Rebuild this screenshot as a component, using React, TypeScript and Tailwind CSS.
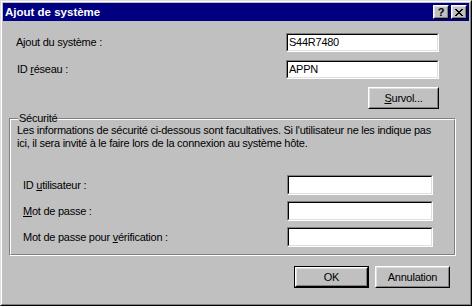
import React from "react";

function CloseGlyph() {
  // 8x7 pixel X
  const rows = [
    [0, 1, 6, 7],
    [1, 2, 5, 6],
    [2, 3, 4, 5],
    [3, 4],
    [2, 3, 4, 5],
    [1, 2, 5, 6],
    [0, 1, 6, 7],
  ];
  return (
    <svg width="8" height="7" viewBox="0 0 8 7" shapeRendering="crispEdges">
      {rows.map((r, y) =>
        r.map((x) => <rect key={`${x}-${y}`} x={x} y={y} width="1" height="1" fill="#000" />)
      )}
    </svg>
  );
}

function CaptionButton({ children }: { children: React.ReactNode }) {
  return (
    <div className="w-[16px] h-[14px] border border-t-white border-l-white border-r-black border-b-black">
      <div className="w-full h-full bg-[#c0c0c0] border border-t-[#dfdfdf] border-l-[#dfdfdf] border-r-[#808080] border-b-[#808080] flex items-center justify-center">
        {children}
      </div>
    </div>
  );
}

function Field({ value, size }: { value?: string; size: string }) {
  return (
    <div className={`${size} border border-t-[#808080] border-l-[#808080] border-r-white border-b-white`}>
      <div className="w-full h-full bg-white border border-t-black border-l-black border-r-[#dfdfdf] border-b-[#dfdfdf] flex items-center pl-[1px] text-[11px] leading-[13px] tracking-[-0.25px] text-black">
        {value}
      </div>
    </div>
  );
}

function PushButton({ children, size }: { children: React.ReactNode; size: string }) {
  return (
    <div className={`${size} border border-t-white border-l-white border-r-black border-b-black`}>
      <div className="w-full h-full bg-[#c0c0c0] border border-t-[#dfdfdf] border-l-[#dfdfdf] border-r-[#808080] border-b-[#808080] flex items-center justify-center text-[11px] leading-[13px] tracking-[-0.25px] text-black">
        {children}
      </div>
    </div>
  );
}

export default function App() {
  return (
    <div className="w-[472px] h-[306px] bg-[#c0c0c0] font-['Liberation_Sans',Arial,sans-serif] text-black text-[11px] leading-[13px] tracking-[-0.25px]">
      <div className="w-full h-full border border-t-[#dfdfdf] border-l-[#dfdfdf] border-r-black border-b-black">
        <div className="w-full h-full border border-t-white border-l-white border-r-[#808080] border-b-[#808080] p-px flex flex-col">
          {/* Title bar */}
          <div className="h-[18px] bg-[#000080] flex items-center justify-between pl-[2px] pr-[2px]">
            <span className="text-white font-bold text-[11.5px] tracking-normal">Ajout de système</span>
            <div className="flex items-center gap-[2px]">
              <CaptionButton>
                <span className="font-bold text-[11px] leading-[11px] tracking-normal">?</span>
              </CaptionButton>
              <CaptionButton>
                <CloseGlyph />
              </CaptionButton>
            </div>
          </div>

          {/* Row 1 */}
          <div className="mt-[12px] flex items-center pl-[13px] pr-[30px]">
            <span>Ajout du système :</span>
            <div className="ml-auto">
              <Field value="S44R7480" size="w-[153px] h-[19px]" />
            </div>
          </div>

          {/* Row 2 */}
          <div className="mt-[8px] flex items-center pl-[14px] pr-[30px]">
            <span>
              ID <u className="underline-offset-[1px]">r</u>éseau :
            </span>
            <div className="ml-auto">
              <Field value="APPN" size="w-[153px] h-[19px]" />
            </div>
          </div>

          {/* Survol */}
          <div className="mt-[8px] flex justify-end pr-[30px]">
            <PushButton size="w-[71px] h-[22px]">
              <span>
                <u className="underline-offset-[1px]">S</u>urvol...
              </span>
            </PushButton>
          </div>

          {/* Group box */}
          <div className="mt-[9px] ml-[6px] w-[447px] h-[138px] relative border border-t-[#808080] border-l-[#808080] border-r-white border-b-white">
            <span className="absolute -top-[7px] left-[8px] px-[1px] bg-[#c0c0c0]">Sécurité</span>
            <div className="w-full h-full border border-t-white border-l-white border-r-[#808080] border-b-[#808080] pt-[4px] pl-[6px] pr-[20px] flex flex-col">
              <p>
                Les informations de sécurité ci-dessous sont facultatives. Si l'utilisateur ne les indique pas
                <br />
                ici, il sera invité à le faire lors de la connexion au système hôte.
              </p>

              <div className="mt-[25px] flex flex-col gap-[6px] pl-[6px] pr-[1px]">
                <div className="flex items-center">
                  <span>
                    ID <u className="underline-offset-[1px]">u</u>tilisateur :
                  </span>
                  <div className="ml-auto">
                    <Field size="w-[146px] h-[20px]" />
                  </div>
                </div>
                <div className="flex items-center">
                  <span>
                    <u className="underline-offset-[1px]">M</u>ot de passe :
                  </span>
                  <div className="ml-auto">
                    <Field size="w-[146px] h-[20px]" />
                  </div>
                </div>
                <div className="flex items-center">
                  <span>
                    Mot de passe pour <u className="underline-offset-[1px]">v</u>érification :
                  </span>
                  <div className="ml-auto">
                    <Field size="w-[146px] h-[20px]" />
                  </div>
                </div>
              </div>
            </div>
          </div>

          {/* Buttons */}
          <div className="mt-[10px] flex justify-end gap-[6px] pr-[19px]">
            <div className="w-[75px] h-[22px] border border-black">
              <PushButton size="w-full h-full">OK</PushButton>
            </div>
            <PushButton size="w-[75px] h-[22px]">Annulation</PushButton>
          </div>
        </div>
      </div>
    </div>
  );
}
